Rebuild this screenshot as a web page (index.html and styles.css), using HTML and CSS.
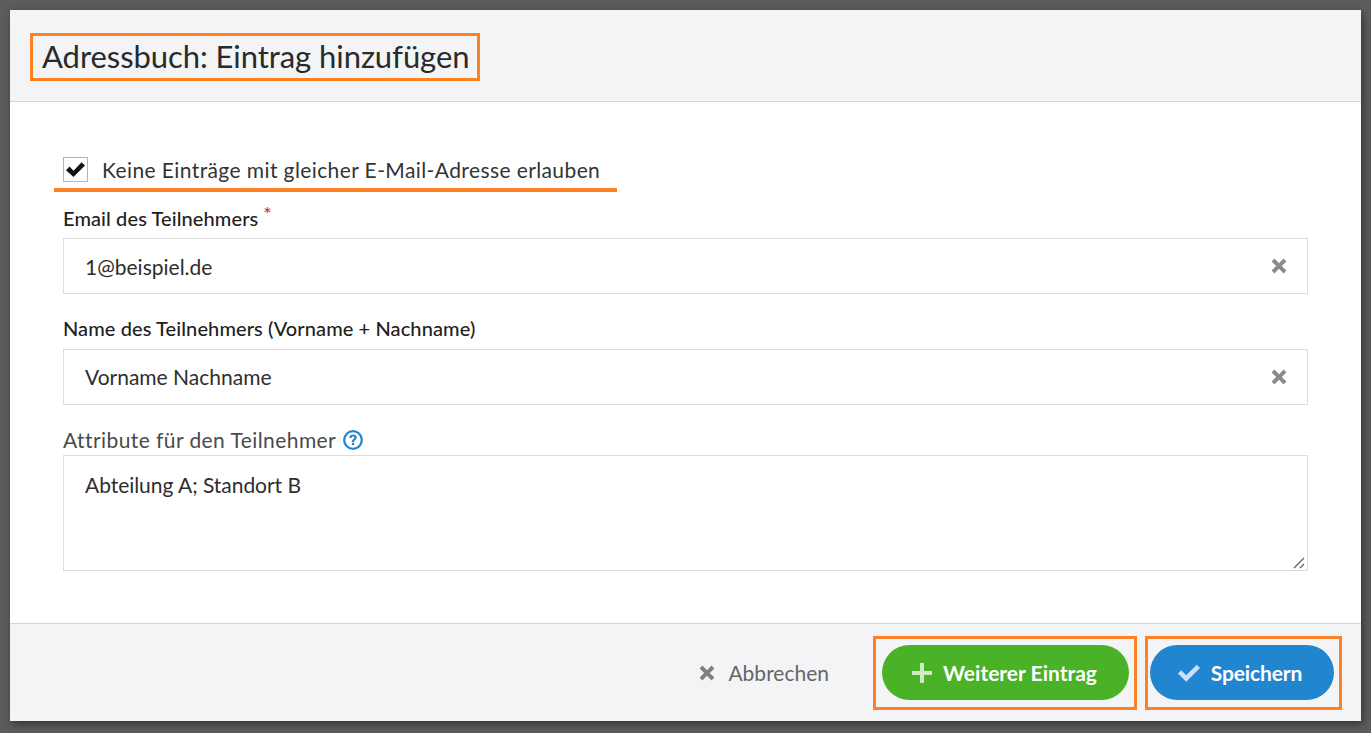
FILE: index.html
```html
<!DOCTYPE html>
<html lang="de">
<head>
<meta charset="utf-8">
<title>Adressbuch</title>
<link rel="stylesheet" href="styles.css">
</head>
<body>
<div class="dialog">
  <header class="head">
    <h1 class="title">Adressbuch: Eintrag hinzufügen</h1>
  </header>
  <main class="content">
    <div class="check-row">
      <span class="checkbox"><svg viewBox="0 0 20 20" width="21" height="21"><path d="M1 10.6 4.2 7.2l3.9 3.9L15.8 3 19 6.3 8.1 17.2z" fill="#111"/></svg></span>
      <span class="check-label">Keine Einträge mit gleicher E-Mail-Adresse erlauben</span>
    </div>
    <label class="lbl strong lbl-email">Email des Teilnehmers<sup class="req">*</sup></label>
    <div class="field">
      <span>1@beispiel.de</span>
      <svg class="clear" viewBox="0 0 16 16" width="16" height="16"><path d="M3.4 .6 8 5.2 12.6 .6l2.8 2.8L10.8 8l4.6 4.6-2.8 2.8L8 10.8l-4.6 4.6-2.8-2.8L5.2 8 .6 3.4z" fill="#8a8a8a"/></svg>
    </div>
    <label class="lbl strong lbl-name">Name des Teilnehmers (Vorname + Nachname)</label>
    <div class="field field-name">
      <span>Vorname Nachname</span>
      <svg class="clear" viewBox="0 0 16 16" width="16" height="16"><path d="M3.4 .6 8 5.2 12.6 .6l2.8 2.8L10.8 8l4.6 4.6-2.8 2.8L8 10.8l-4.6 4.6-2.8-2.8L5.2 8 .6 3.4z" fill="#8a8a8a"/></svg>
    </div>
    <label class="lbl attr lbl-attr">Attribute für den Teilnehmer
      <svg class="help" viewBox="0 0 20 20" width="20" height="20"><circle cx="10" cy="10" r="8.8" fill="none" stroke="#2185d0" stroke-width="2.3"/><path d="M6.4 7.9C6.4 5.7 8 4.5 10.1 4.5s3.6 1.2 3.6 3.1c0 2.6-2.6 2.5-2.6 4.4H8.9c0-3.1 2.4-2.9 2.4-4.3 0-.7-.5-1.2-1.3-1.2s-1.3.6-1.4 1.4z" fill="#2185d0"/><rect x="8.9" y="12.8" width="2.2" height="2.2" fill="#2185d0"/></svg>
    </label>
    <div class="area">
      <span>Abteilung A; Standort B</span>
      <svg class="grip" viewBox="0 0 12 12" width="12" height="12"><path d="M1 11 11 1M7 11l4-4" stroke="#666" stroke-width="1.4" fill="none"/></svg>
    </div>
  </main>
  <footer class="foot">
    <span class="cancel">
      <svg viewBox="0 0 16 16" width="16" height="16"><path d="M3.4 .6 8 5.2 12.6 .6l2.8 2.8L10.8 8l4.6 4.6-2.8 2.8L8 10.8l-4.6 4.6-2.8-2.8L5.2 8 .6 3.4z" fill="#808080"/></svg>
      Abbrechen
    </span>
    <span class="mark mark-add">
      <button class="btn green">
        <svg viewBox="0 0 20 20" width="20" height="20"><path d="M8 0h4v8h8v4h-8v8H8v-8H0V8h8z" fill="#cfe9c4"/></svg>
        Weiterer Eintrag
      </button>
    </span>
    <span class="mark mark-save">
      <button class="btn blue">
        <svg viewBox="0 0 22 20" width="22" height="20"><path d="M0 10.5 3.2 7.3l5 5L18.8 1.8 22 5 8.2 18.7z" fill="#c9e1f5"/></svg>
        Speichern
      </button>
    </span>
  </footer>
</div>
</body>
</html>
```

FILE: styles.css
```css
* { box-sizing: border-box; }
html, body { height: 100%; }
body {
  margin: 0;
  height: 733px;
  padding: 10px 10px 12px 10px;
  background: #5c5c5c;
  overflow: hidden;
  font-family: "Lato", sans-serif;
  color: #2b2b2b;
}
.dialog {
  width: 1351px;
  height: 711px;
  background: #fff;
  display: flex;
  flex-direction: column;
  box-shadow: 2px 3px 8px rgba(0,0,0,.45);
}
.head {
  height: 92px;
  background: #f3f4f6;
  border-bottom: 1px solid #d6d6d6;
  padding: 23px 0 0 20px;
}
.title {
  margin: 0;
  display: block;
  width: 450px;
  height: 48px;
  border: 3px solid #ff8125;
  padding: 0 0 0 9px;
  font-size: 31px;
  line-height: 41px;
  letter-spacing: -.06px;
  font-weight: 400;
  color: #2a2a2a;
  white-space: nowrap;
}
.content {
  flex: 1;
  padding: 55px 53px 0;
}
.check-row {
  display: flex;
  align-items: flex-start;
  gap: 14px;
  height: 35px;
  width: 563px;
  margin-left: -9px;
  padding: 0 0 0 9px;
  border-bottom: 4px solid #ff8125;
}
.checkbox {
  width: 25px;
  height: 25px;
  border: 1px solid #b5b5b5;
  background: #fff;
  display: flex;
  align-items: center;
  justify-content: center;
}
.check-label {
  font-size: 21px;
  line-height: 25px;
  letter-spacing: .4px;
  color: #333;
  white-space: nowrap;
}
.lbl {
  display: block;
  white-space: nowrap;
}
.strong {
  font-weight: 500;
  font-size: 20px;
  letter-spacing: .1px;
  color: #222;
}
.lbl-email { margin-top: 15px; line-height: 22px; height: 31px; }
.lbl-name { margin-top: 23px; line-height: 22px; height: 32px; }
.lbl-attr { margin-top: 21px; line-height: 24px; height: 29px; padding-bottom: 2px; color: #4a4a4a; font-size: 21px; letter-spacing: .43px; display: flex; align-items: center; gap: 7px; }
.req { color: #d33; font-size: 20px; line-height: 0; vertical-align: 5px; margin-left: 5px; }
.field {
  height: 56px;
  border: 1px solid #ddd;
  display: flex;
  align-items: center;
  justify-content: space-between;
  padding: 0 20px 0 21px;
  font-size: 21px;
  color: #2e2e2e;
}
.field-name { padding-bottom: 1px; }
.area {
  position: relative;
  height: 116px;
  border: 1px solid #ddd;
  padding: 17px 21px;
  font-size: 21px;
  line-height: 24px;
  letter-spacing: -.04px;
  color: #2e2e2e;
}
.help { flex: none; }
.grip { position: absolute; right: 2px; bottom: 1px; }
.foot {
  height: 98px;
  background: #f3f4f6;
  border-top: 1px solid #d6d6d6;
  display: flex;
  align-items: center;
  justify-content: flex-end;
  padding: 0 19px 0 0;
}
.cancel {
  display: flex;
  align-items: center;
  gap: 13px;
  font-size: 21px;
  color: #666;
  margin-right: 44px;
}
.mark {
  border: 3px solid #ff8125;
  height: 74px;
  display: flex;
  align-items: center;
}
.mark-add { width: 264px; padding-left: 6px; margin-right: 8px; }
.mark-save { width: 197px; padding-left: 2px; }
.btn {
  height: 55px;
  border: 0;
  border-radius: 28px;
  color: #fff;
  font-family: "Lato", sans-serif;
  font-size: 21px;
  font-weight: 700;
  display: flex;
  align-items: center;
  justify-content: center;
  gap: 11px;
  white-space: nowrap;
}
.green { width: 247px; background: #4ab227; padding: 0 2px 0 0; }
.blue { width: 184px; background: #2185d0; padding: 0 4px 0 0; letter-spacing: -.12px; }
```
